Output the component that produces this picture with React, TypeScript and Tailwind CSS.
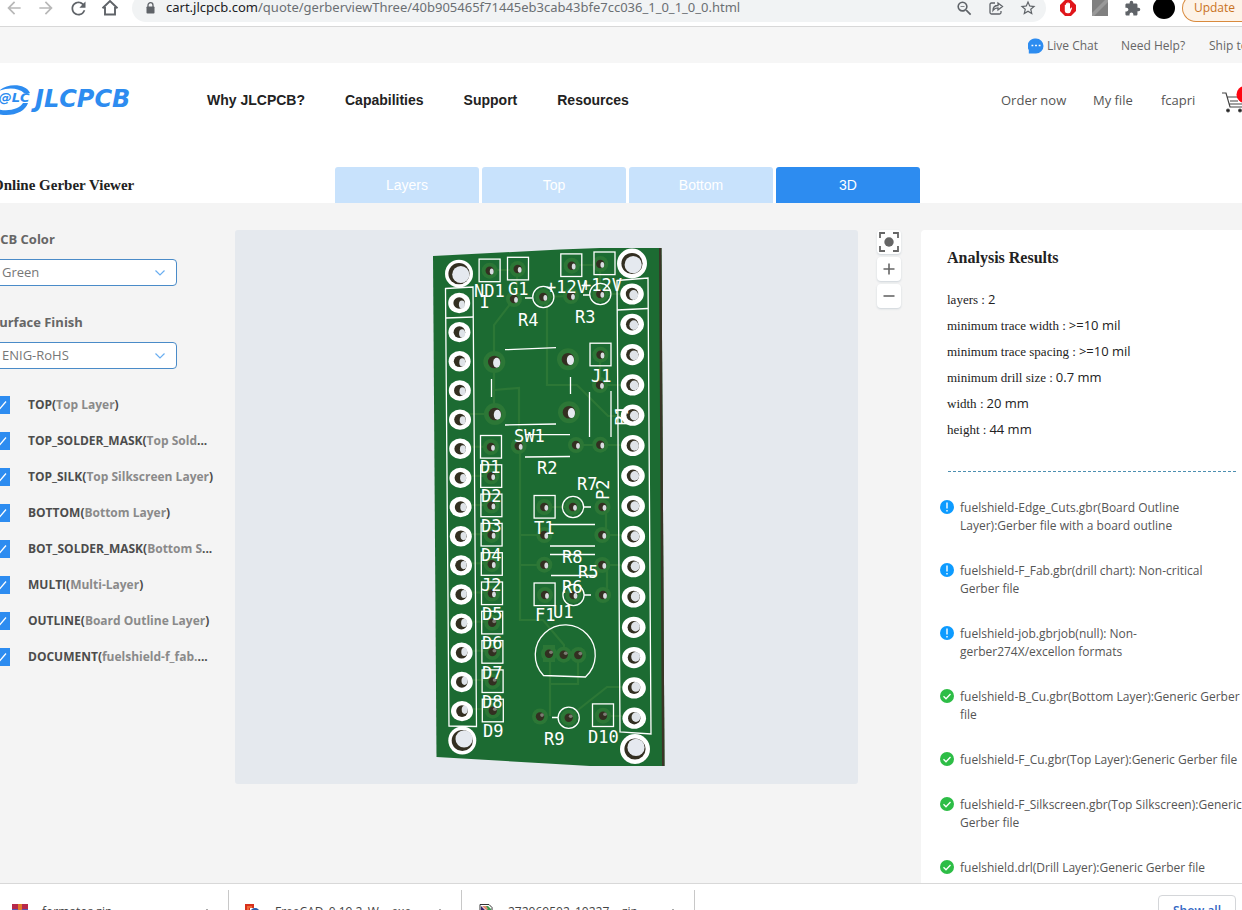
import type { ReactNode } from "react";
import { MdArrowBack, MdArrowForward, MdRefresh, MdStarBorder, MdZoomOut } from "react-icons/md";

const layers: [string, string, string][] = [
  ["TOP(", "Top Layer", ")"],
  ["TOP_SOLDER_MASK(", "Top Sold", "..."],
  ["TOP_SILK(", "Top Silkscreen Layer", ")"],
  ["BOTTOM(", "Bottom Layer", ")"],
  ["BOT_SOLDER_MASK(", "Bottom S", "..."],
  ["MULTI(", "Multi-Layer", ")"],
  ["OUTLINE(", "Board Outline Layer", ")"],
  ["DOCUMENT(", "fuelshield-f_fab.", "..."],
];

const results: [string, string][] = [
  ["layers", "2"],
  ["minimum trace width", ">=10 mil"],
  ["minimum trace spacing", ">=10 mil"],
  ["minimum drill size", "0.7 mm"],
  ["width", "20 mm"],
  ["height", "44 mm"],
];

const files: ["info" | "ok", string][] = [
  ["info", "fuelshield-Edge_Cuts.gbr(Board Outline Layer):Gerber file with a board outline"],
  ["info", "fuelshield-F_Fab.gbr(drill chart): Non-critical Gerber file"],
  ["info", "fuelshield-job.gbrjob(null): Non-gerber274X/excellon formats"],
  ["ok", "fuelshield-B_Cu.gbr(Bottom Layer):Generic Gerber file"],
  ["ok", "fuelshield-F_Cu.gbr(Top Layer):Generic Gerber file"],
  ["ok", "fuelshield-F_Silkscreen.gbr(Top Silkscreen):Generic Gerber file"],
  ["ok", "fuelshield.drl(Drill Layer):Generic Gerber file"],
];

/* ---------- board drawing ---------- */

const leftPads = Array.from({ length: 15 }, (_, i) => [459.2 + i * 0.2, 303 + i * 29.15]);
const rightPads = Array.from({ length: 15 }, (_, i) => [632 + i * 0.16, 294 + i * 30.3]);
const diodeRow = Array.from({ length: 10 }, (_, i): [number, number] => [491 + i * 0.2, 447 + i * 29.3]);

const smallHoles: [number, number][] = [
  [489.7, 270.7], [517.7, 269], [571.7, 265.7], [600.3, 264],
  [514, 299], [543.3, 297], [571, 296], [600.3, 294],
  [600.5, 354.7], [600, 385],
  [518.7, 446], [576, 445], [600.3, 444.7],
  [544.3, 507], [573, 507], [602.5, 507],
  [544.3, 535], [602.3, 535], [544.3, 564.7], [602.3, 565],
  [545, 595], [573.5, 595], [603, 595],
  [549, 653.7], [563.7, 654.7], [578.3, 655],
  [540, 716.5], [568.7, 717.7], [603, 715.7],
  ...diodeRow,
];

const switchHoles: [number, number][] = [[494.3, 362], [568, 359.3], [495, 414], [569, 412.3]];

const squares: [number, number][] = [
  [489.6, 270.6], [518, 268.8], [571.3, 265.4], [604.5, 263.5],
  [600.5, 354.7], [544.6, 507], [544.6, 594.5], [603, 715.4],
  ...diodeRow,
];

const rings: [number, number][] = [[543.3, 297], [600.3, 294], [573, 507], [573.5, 595], [568.7, 717.7]];

const labels: [string, number, number][] = [
  ["ND1", 474, 297], ["G1", 508, 295], ["1", 479, 308], ["+12V", 546, 293], ["+12V", 581, 291],
  ["R4", 518, 326], ["R3", 575, 323], ["J1", 591, 382], ["SW1", 514, 442], ["R2", 537, 474],
  ["D1", 480, 473], ["D2", 481, 502], ["D3", 481, 532], ["D4", 481, 561], ["J2", 481, 591],
  ["D5", 482, 620], ["D6", 482, 649], ["D7", 482, 679], ["D8", 482, 708], ["D9", 483, 737],
  ["R7", 577, 490], ["T1", 534, 534], ["R8", 562, 563], ["R5", 578, 578], ["R6", 562, 593],
  ["F1", 535, 621], ["U1", 553, 618], ["R9", 544, 745], ["D10", 588, 743],
];

function Board() {
  return (
    <svg viewBox="235 230 623 554" className="block w-full" role="img" aria-label="3D view of the board">
      <path d="M433 256L560 249.5L600 248H661.5L664.5 766H590L436.5 757Z" fill="#1c6b32" />
      <path d="M659 248H661.5L664.5 766H662L660.5 500Z" fill="#3a3526" />
      <g fill="none" stroke="#2c7736" strokeWidth="2.2">
        <path d="M514 299L494 325V414H460" />
        <path d="M494 390L519 388V447M520 447V620H543L564 645V654" />
        <path d="M517 269V297M490 270H517M572 265H600V294H632" />
        <path d="M543 297L571 296M547 300V385H577L608 416H632" />
        <path d="M576 445H632M520 535H544M520 565H544M602 535H633M602 565H633" />
        <path d="M544 507H573M606 507V535M607 565V595M600 385H632M600 355V385" />
        <path d="M550 654V716M578 654V684H550M569 717L607 687H634M603 716H634" />
        {leftPads.slice(5).map(([x, y], i) => (
          <path key={i} d={`M${x} ${y - 2}H${x + 30}`} />
        ))}
      </g>
      <g fill="#2c7736">
        {smallHoles.map(([x, y], i) => (
          <circle key={i} cx={x} cy={y} r="8" />
        ))}
        {switchHoles.map(([x, y], i) => (
          <circle key={i} cx={x} cy={y} r="11" />
        ))}
        <rect x="543" y="645" width="12" height="17" />
      </g>
      <g fill="none" stroke="#fff" strokeWidth="1.3">
        <path d="M445.5 288.5L473 287L476.5 726.5L449 726Z" />
        <path d="M446 318L473 317" />
        <path d="M617 280.5L648 278L651 734L620 732Z" />
        <path d="M617 310L648 308.5" />
        <path d="M505 349.7L556 347.7M491.5 379V397M570.5 377V394M505 425L556 424M589.5 392V437M611 391V437" />
        <path d="M525 434.7H570M525 457L570 456.5M550 524.5H595M550 546H595M550 554.5H595M551 575.5H595" />
        <path d="M525 298H532M583 295H590M583 507H591M584 595H591M552 717.5H558" />
        <path d="M543.5 675.5A30 30 0 1 1 585.5 677Z" />
        {squares.map(([x, y], i) => (
          <rect key={i} x={x - 10.5} y={y - 11.5} width="21" height="22.6" />
        ))}
        {rings.map(([x, y], i) => (
          <circle key={i} cx={x} cy={y} r="10.6" />
        ))}
      </g>
      {smallHoles.map(([x, y], i) => (
        <g key={i}>
          <circle cx={x} cy={y} r="4.2" fill="#332f21" />
          <ellipse
            cx={x + 2}
            cy={y - (y > 600 ? 1.4 : -0.8)}
            rx="1.9"
            ry={y > 600 ? 1.8 : 2.9}
            fill={y > 600 ? "#7b7c72" : "#d8dce0"}
          />
        </g>
      ))}
      {switchHoles.map(([x, y], i) => (
        <g key={i}>
          <circle cx={x} cy={y} r="6.3" fill="#332f21" />
          <ellipse cx={x + 2.4} cy={y + 0.8} rx="3.6" ry="5" fill="#e5e9ef" />
        </g>
      ))}
      {leftPads.map(([x, y], i) => (
        <g key={i}>
          <ellipse cx={x} cy={y} rx="11" ry="10.2" fill="#fff" />
          <circle cx={x} cy={y} r="5.8" fill="#332f21" />
          <ellipse cx={x + 2.7} cy={y + 1.5 - i * 0.2} rx="3" ry="4.1" fill="#dfe3e8" />
        </g>
      ))}
      {rightPads.map(([x, y], i) => (
        <g key={i}>
          <ellipse cx={x} cy={y} rx="11.8" ry="10.6" fill="#fff" />
          <circle cx={x} cy={y} r="6.2" fill="#332f21" />
          <ellipse cx={x + 1.7} cy={y + 1 - i * 0.15} rx="4.4" ry="4.9" fill="#dfe3e8" />
        </g>
      ))}
      {[
        [459, 273.7, 1.8, 0.8],
        [632, 263.5, 1.2, 1.2],
        [462.3, 740.5, 1.8, -1.6],
        [635, 749, 1, -1.6],
      ].map(([x, y, dx, dy], i) => (
        <g key={i}>
          <circle cx={x} cy={y} r={i % 2 ? 15 : 14} fill="#fff" />
          <circle cx={x} cy={y} r="10.6" fill="#332f21" />
          <circle cx={x + dx} cy={y + dy} r="8.6" fill="#e5e9ef" />
        </g>
      ))}
      <g fill="#fff" className="font-['DejaVu_Sans_Mono',monospace] text-[17px]">
        {labels.map(([t, x, y], i) => (
          <text key={i} x={x} y={y}>
            {t}
          </text>
        ))}
        <text transform="translate(609 500) rotate(-90)">P2</text>
        <text transform="translate(628 426) rotate(-90)">P1</text>
      </g>
    </svg>
  );
}

/* ---------- small parts ---------- */

function BarButton({ label, children }: { label: string; children: ReactNode }) {
  return (
    <button aria-label={label} className="grid w-8 shrink-0 place-items-center">
      {children}
    </button>
  );
}

function Picker({ id, label, value }: { id: string; label: string; value: string }) {
  return (
    <div>
      <label htmlFor={id} className="block text-[13px] leading-5 font-bold text-[#666]">
        {label}
      </label>
      <div className="mt-[10px] grid w-[185px] items-center">
        <select
          id={id}
          className="col-start-1 row-start-1 h-[27px] w-full appearance-none rounded border border-[#4a8bc8] bg-white pl-[9px] text-[13px] text-[#777]"
        >
          <option>{value}</option>
        </select>
        <svg
          viewBox="0 0 10 6"
          className="pointer-events-none col-start-1 row-start-1 mr-3 h-[6px] w-[10px] justify-self-end fill-none stroke-[#6aaef0]"
        >
          <path d="M0.5 0.5L5 5L9.5 0.5" strokeWidth="1.2" />
        </svg>
      </div>
    </div>
  );
}

function LayerRow({ parts, id }: { parts: [string, string, string]; id: string }) {
  return (
    <li className="flex h-9 items-center">
      <span className="grid size-[18px] shrink-0 place-items-center">
        <input
          id={id}
          type="checkbox"
          defaultChecked
          className="col-start-1 row-start-1 size-[18px] appearance-none bg-[#2d8cf0]"
        />
        <svg viewBox="0 0 18 18" className="pointer-events-none col-start-1 row-start-1 size-[18px] fill-none stroke-white">
          <path d="M4 9.5L7.5 13L14 5.5" strokeWidth="1.3" />
        </svg>
      </span>
      <label htmlFor={id} className="ml-[18px] text-[12px] font-bold whitespace-nowrap text-[#4c4c4c]">
        {parts[0]}
        <span className="text-[#8a8a8a]">{parts[1]}</span>
        {parts[2]}
      </label>
    </li>
  );
}

function StatusIcon({ kind }: { kind: "info" | "ok" }) {
  return (
    <svg viewBox="0 0 14 14" className="mt-px size-[14px] shrink-0">
      <circle cx="7" cy="7" r="7" fill={kind === "info" ? "#0d9bff" : "#2dbd46"} />
      {kind === "info" ? (
        <path d="M7 2.5V8.5M7 10V11.5" stroke="#fff" strokeWidth="1.4" />
      ) : (
        <path d="M3.5 7.2L6 9.7L10.5 5" stroke="#fff" strokeWidth="1.3" fill="none" />
      )}
    </svg>
  );
}

function Download({ icon, name }: { icon: ReactNode; name: string }) {
  return (
    <div className="flex h-11 w-[233px] shrink-0 items-center border-r border-[#c8c8c8] pr-4 pl-4 text-[12px] text-[#444]">
      {icon}
      <span className="ml-[14px] flex-1">{name}</span>
      <svg viewBox="0 0 10 6" className="w-[10px] fill-none stroke-[#666]">
        <path d="M1 5L5 1L9 5" strokeWidth="1.5" />
      </svg>
    </div>
  );
}

const zoomButton =
  "grid h-6 w-6 place-items-center rounded-sm bg-white text-[#666] shadow-[0_1px_2px_rgba(120,140,160,0.3)]";

export default function App() {
  return (
    <div className="flex h-screen flex-col overflow-hidden bg-white font-['Open_Sans','Noto_Sans',sans-serif] text-[#555]">
      {/* browser toolbar */}
      <div className="h-[27px] shrink-0 overflow-hidden border-b border-[#d8d8d8]">
        <div className="-mt-[6px] flex h-7 items-center text-[#5f6368]">
          <div className="-ml-[2px] flex">
            <BarButton label="Back"><MdArrowBack size={20} color="#b8b8b8" /></BarButton>
            <BarButton label="Forward"><MdArrowForward size={20} color="#b8b8b8" /></BarButton>
            <BarButton label="Reload"><MdRefresh size={21} /></BarButton>
            <BarButton label="Home">
              <svg viewBox="0 0 18 18" className="size-[18px] fill-none stroke-current" strokeWidth="1.9">
                <path d="M1.5 9.2L9 2L16.5 9.2M4 8V15.5H14V8" />
              </svg>
            </BarButton>
          </div>
          <div className="ml-[6px] flex h-7 min-w-0 flex-1 items-center rounded-full bg-[#f1f3f4] pr-[2px] pl-[14px]">
            <svg viewBox="0 0 9 12" className="h-3 w-[9px]">
              <path d="M2 5V3.2A2.500 2.500 0 0 1 7 3.200V5" fill="none" stroke="currentColor" strokeWidth="1.300" />
              <rect x="0.500" y="4.500" width="8" height="7" rx="0.800" fill="currentColor" />
            </svg>
            <span className="ml-[11px] flex-1 truncate font-['Noto_Sans',sans-serif] text-[13px] text-[#6b6f73]">
              <span className="text-[#202124]">cart.jlcpcb.com</span>
              /quote/gerberviewThree/40b905465f71445eb3cab43bfe7cc036_1_0_1_0_0.html
            </span>
            <BarButton label="Zoom"><MdZoomOut size={19} /></BarButton>
            <BarButton label="Share">
              <svg viewBox="0 0 16 16" className="size-4 fill-none stroke-current" strokeWidth="1.3">
                <path d="M7 3H3.5Q2 3 2 4.5V12.5Q2 14 3.5 14H11.5Q13 14 13 12.5V11" />
                <path d="M5 10.5C5 7 7 5.5 10 5.500V3L14.5 6.5L10 10V7.8C8 7.800 6.500 8.300 5 10.5Z" />
              </svg>
            </BarButton>
            <BarButton label="Bookmark"><MdStarBorder size={18} /></BarButton>
          </div>
          <div className="ml-[6px] flex shrink-0">
            <BarButton label="Ad blocker">
              <svg viewBox="0 0 16 16" className="size-4">
                <path d="M5 0H11L16 5V11L11 16H5L0 11V5Z" fill="#e0161b" />
                <path d="M4.8 8V5Q5.4 4.2 6 5V3.5Q6.6 2.6 7.3 3.5V2.7Q8 1.9 8.7 2.7V3.5Q9.4 2.7 10 3.6V9L11.2 7.5Q12.2 7.4 12 8.3L10.5 12Q10 13.3 8.5 13.3H7.5Q5 13.3 4.8 11Z" fill="#fff" />
              </svg>
            </BarButton>
            <BarButton label="Extension">
              <svg viewBox="0 0 16 16" className="size-4">
                <path d="M0 0H16V16H0Z" fill="#808080" />
                <path d="M0 13L13 0H16V2L2 16H0Z" fill="#999" />
              </svg>
            </BarButton>
            <BarButton label="Extensions">
              <svg viewBox="0 0 24 24" className="size-[17px] fill-current">
                <path d="M20.5 11H19V7c0-1.100-.9-2-2-2h-4V3.500a2.500 2.500 0 0 0-5 0V5H4c-1.100 0-2 .9-2 2v3.800h1.500c1.490 0 2.700 1.210 2.700 2.700s-1.210 2.700-2.700 2.700H2V20c0 1.100.9 2 2 2h3.800v-1.500c0-1.490 1.210-2.700 2.700-2.700s2.700 1.210 2.700 2.700V22H17c1.100 0 2-.9 2-2v-4h1.500a2.500 2.500 0 0 0 0-5z" />
              </svg>
            </BarButton>
            <BarButton label="Profile"><span className="size-[22px] rounded-full bg-black" /></BarButton>
          </div>
          <button className="ml-[2px] h-7 w-[60px] shrink-0 rounded-l-full border border-r-0 border-[#d98a3d] bg-[#fdf3e8] pl-1 text-center text-[12px] text-[#c9721c]">
            Update
          </button>
        </div>
      </div>

      {/* page */}
      <div className="flex min-h-0 flex-1 flex-col overflow-hidden">
        <div className="flex h-9 shrink-0 items-center justify-end bg-[#f6f6f6] pt-px text-[12px] text-[#666]">
          <a href="#chat" className="flex w-[93px] shrink-0 items-center">
            <svg viewBox="0 0 16 16" className="mr-[3px] size-4">
              <path d="M8 0.5A7.5 7.5 0 1 1 8 15.5H0.8V12A7.5 7.5 0 0 1 8 0.5Z" fill="#2d8cf0" />
              <path d="M3.5 7.5H5.3M7.1 7.5H8.9M10.7 7.5H12.5" stroke="#fff" strokeWidth="1.5" />
            </svg>
            Live Chat
          </a>
          <a href="#help" className="w-[88px] shrink-0">Need Help?</a>
          <a href="#ship" className="w-[33px] shrink-0 overflow-hidden whitespace-nowrap">Ship to</a>
        </div>

        <header className="flex h-[74px] shrink-0 items-center">
          <a href="#home" className="-ml-2 flex w-[215px] shrink-0 items-center" aria-label="JLCPCB home">
            <svg viewBox="0 0 144 32" className="w-36 font-['DejaVu_Sans',sans-serif]">
              <path d="M7 7C14 -1 34 -1 38 9H32C27 4 16 3 7 7Z" fill="#2d8cf0" />
              <path d="M0 23C12 29 27 26 31 19H36C33 29 16 35 0 28Z" fill="#2d8cf0" />
              <text x="2" y="18" fill="#2d8cf0" className="text-[13px] font-bold italic">J@LC</text>
              <text x="43" y="23" fill="#2d8cf0" className="text-[24px] font-bold italic">JLCPCB</text>
            </svg>
          </a>
          <nav className="flex flex-1 gap-10 font-['Liberation_Sans',sans-serif] text-[14px] font-bold text-[#222]">
            <a href="#why">Why JLCPCB?</a>
            <a href="#capabilities">Capabilities</a>
            <a href="#support">Support</a>
            <a href="#resources">Resources</a>
          </nav>
          <div className="flex shrink-0 items-center overflow-hidden pt-[2px] text-[13px] text-[#555]">
            <a href="#order" className="w-[92px]">Order now</a>
            <a href="#files" className="w-[68px]">My file</a>
            <a href="#account" className="w-[60px]">fcapri</a>
            <a href="#cart" aria-label="Cart" className="w-[21px] overflow-hidden">
              <svg viewBox="0 0 30 32" className="h-8 w-[30px] fill-none stroke-[#444]" strokeWidth="1.2">
                <path d="M1 8H5L9 22H24M6 12H24L22 19H8M9 16H17" />
                <circle cx="7" cy="25.500" r="1.300" fill="#111" />
                <circle cx="19" cy="25.500" r="1.300" fill="#111" />
                <circle cx="24" cy="9.500" r="8.500" fill="#ff0510" stroke="none" />
              </svg>
            </a>
          </div>
        </header>

        <div className="mt-[30px] -ml-2 flex h-9 shrink-0 items-center">
          <h1 className="w-[343px] shrink-0 font-['Liberation_Serif',serif] text-[15px] font-bold text-[#222]">
            Online Gerber Viewer
          </h1>
          <div className="flex gap-[3px] font-['Liberation_Sans',sans-serif] text-[14px] text-white">
            {["Layers", "Top", "Bottom"].map((t) => (
              <button key={t} className="h-9 w-36 rounded-t-[3px] bg-[#c8e2fc]">{t}</button>
            ))}
            <button className="h-9 w-36 rounded-t-[3px] bg-[#2d8cf0]">3D</button>
          </div>
        </div>

        <main className="flex min-h-0 flex-1 items-start overflow-hidden bg-[#f4f4f4] pt-[27px]">
          <aside className="-mt-px -ml-2 w-[243px] shrink-0">
            <div className="flex flex-col gap-[26px]">
              <Picker id="color" label="PCB Color" value="Green" />
              <Picker id="finish" label="Surface Finish" value="ENIG-RoHS" />
            </div>
            <ul className="mt-[18px]">
              {layers.map((parts, i) => (
                <LayerRow key={parts[0]} id={`layer-${i}`} parts={parts} />
              ))}
            </ul>
          </aside>

          <section className="min-w-0 flex-1 overflow-hidden rounded-[3px] bg-[#e5e9ee]">
            <Board />
          </section>

          <div className="flex w-[63px] shrink-0 flex-col items-center gap-[3px] pr-px">
            <button aria-label="Reset view" className={zoomButton}>
              <svg viewBox="0 0 22 22" className="size-[22px] fill-none stroke-current" strokeWidth="1.8">
                <path d="M2 7V2H7M15 2H20V7M20 15V20H15M7 20H2V15" />
                <circle cx="11" cy="11" r="4.7" fill="currentColor" stroke="none" />
              </svg>
            </button>
            <button aria-label="Zoom in" className={zoomButton}>
              <svg viewBox="0 0 12 12" className="size-3 stroke-current" strokeWidth="1.6">
                <path d="M0.5 6H11.5M6 0.5V11.5" />
              </svg>
            </button>
            <button aria-label="Zoom out" className={zoomButton}>
              <svg viewBox="0 0 12 12" className="size-3 stroke-current" strokeWidth="1.6">
                <path d="M0.5 6H11.5" />
              </svg>
            </button>
          </div>

          <section className="w-[321px] shrink-0 rounded-tl bg-white pt-[18px] pb-10">
            <h2 className="pl-[26px] font-['Liberation_Serif',serif] text-[16px] leading-5 font-bold text-[#222]">
              Analysis Results
            </h2>
            <dl className="mt-[18px] pl-[26px] text-[#222]">
              {results.map(([k, v]) => (
                <div key={k} className="flex h-[26px] items-baseline gap-[3px] leading-[26px]">
                  <dt className="font-['Liberation_Serif',serif] text-[13px]">{k} :</dt>
                  <dd className="text-[13px]">{v}</dd>
                </div>
              ))}
            </dl>
            <hr className="mt-[29px] mr-[6px] ml-[27px] border-0 border-t border-dashed border-[#4d8fb0]" />
            <ul className="mt-[27px] flex flex-col gap-[27px] pl-[19px] text-[12px] leading-[18px] text-[#555]">
              {files.map(([kind, text]) => (
                <li key={text} className="flex gap-[6px]">
                  <StatusIcon kind={kind} />
                  <span>{text}</span>
                </li>
              ))}
            </ul>
          </section>
        </main>
      </div>

      {/* downloads */}
      <div className="flex h-[27px] shrink-0 items-start overflow-hidden border-t border-[#d8d8d8] bg-white pt-[6px]">
        <div className="-ml-1 flex">
          <Download
            name="formatos.zip"
            icon={
              <svg viewBox="0 0 16 16" className="size-4">
                <path d="M0 0H16V5H0Z" fill="#b8284a" />
                <path d="M0 5H16V11H0Z" fill="#5a55b0" />
                <path d="M0 11H16V16H0Z" fill="#3c8a4a" />
                <path d="M6 0H10V16H6Z" fill="#e07a2c" />
              </svg>
            }
          />
          <Download
            name="FreeCAD_0.19.2_W....exe"
            icon={
              <svg viewBox="0 0 16 16" className="size-4">
                <path d="M0 0H9V4H5V16H0Z" fill="#d8301c" />
                <path d="M2 2H7V4H4V7H2Z" fill="#f06a38" />
                <circle cx="10" cy="9" r="5" fill="#2b5ca8" />
              </svg>
            }
          />
          <Download
            name="272069502_10227....zip"
            icon={
              <svg viewBox="0 0 16 16" className="size-4">
                <path d="M2 0.5H11L14 3.5V15.5H2Z" fill="#fff" stroke="#333" />
                <path d="M3 2L12 11V14H3Z" fill="#38206a" />
                <path d="M5 2L13 10V5L10 2Z" fill="#3c9a50" />
                <path d="M4 2H8L10 5L8 6Z" fill="#e08a70" />
              </svg>
            }
          />
        </div>
        <button className="mt-[5px] mr-[6px] ml-auto h-8 w-[78px] shrink-0 rounded border border-[#d4d6d9] text-[12px] font-semibold text-[#3367c4]">
          Show all
        </button>
      </div>
    </div>
  );
}
